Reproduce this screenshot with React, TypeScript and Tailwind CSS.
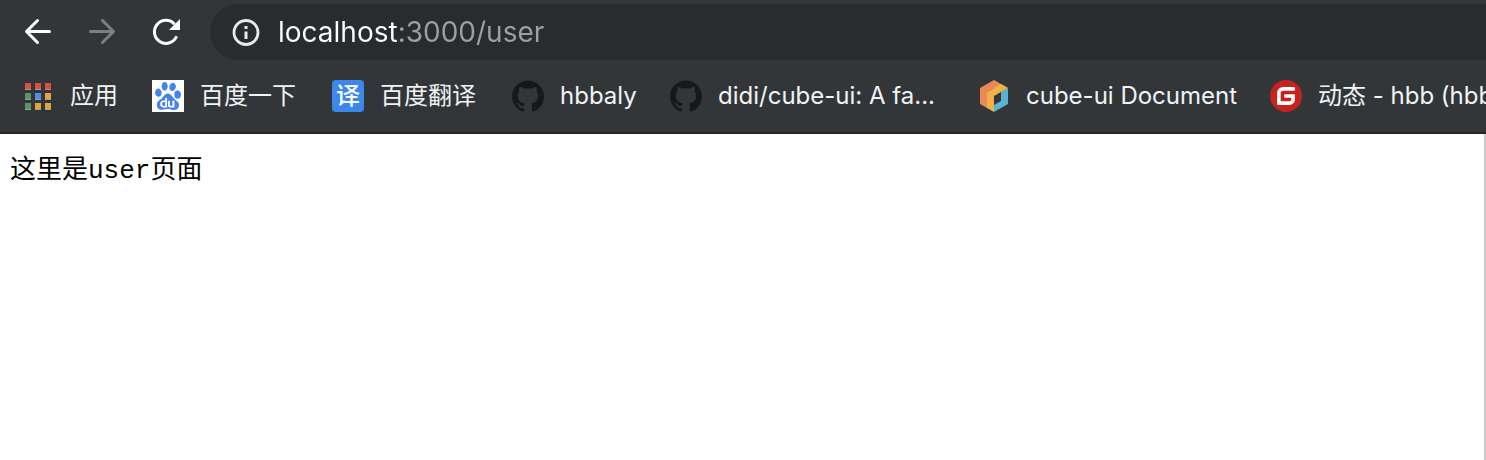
import type { ReactNode } from "react";
import { SiBaidu, SiGitee, SiGithub } from "react-icons/si";

const APP_DOTS = [
  "bg-[#d9503f]", "bg-[#d9503f]", "bg-[#d9503f]",
  "bg-[#559a5c]", "bg-[#4a90e8]", "bg-[#e2a33c]",
  "bg-[#559a5c]", "bg-[#e2a33c]", "bg-[#e2a33c]",
];

function AppsIcon() {
  return (
    <span className="grid grid-cols-3 gap-x-1 gap-y-[3px]">
      {APP_DOTS.map((color, i) => (
        <span key={i} className={`h-[7px] w-1.5 border-b border-[#9a9c9e] ${color}`} />
      ))}
    </span>
  );
}

function CubeIcon() {
  return (
    <svg viewBox="0 0 32 32" className="size-8" aria-hidden="true">
      <path d="M16 0 30 8 23 12 16 8 9 12v16L2 24V8z" fill="#e98a56" />
      <path d="M9 12 23 4l7 4-14 8v16l-7-4z" fill="#efb148" />
      <path d="M30 8v16l-14 8v-8l7-4v-8z" fill="#5ab4cf" />
      <path d="M16 17l7-4v8l-7 4z" fill="#323639" />
    </svg>
  );
}

type Bookmark = { label: string; href: string; width: string; icon: ReactNode };

const BOOKMARKS: Bookmark[] = [
  { label: "应用", href: "#apps", width: "w-[130px]", icon: <AppsIcon /> },
  {
    label: "百度一下",
    href: "#baidu",
    width: "w-[180px]",
    icon: (
      <span className="flex size-8 items-center justify-center bg-white">
        <SiBaidu className="size-7 text-[#4383f0]" />
      </span>
    ),
  },
  {
    label: "百度翻译",
    href: "#fanyi",
    width: "w-[180px]",
    icon: (
      <span className="flex size-8 items-center justify-center rounded bg-[#3c87ec] font-medium text-white" aria-hidden="true">
        译
      </span>
    ),
  },
  { label: "hbbaly", href: "#hbbaly", width: "w-[158px]", icon: <SiGithub className="size-8 text-[#18181a]" /> },
  {
    label: "didi/cube-ui: A fa...",
    href: "#cube-ui",
    width: "w-[308px]",
    icon: <SiGithub className="size-8 text-[#18181a]" />,
  },
  { label: "cube-ui Document", href: "#cube-ui-docs", width: "w-[292px]", icon: <CubeIcon /> },
  {
    label: "动态 - hbb (hbbaly)",
    href: "#gitee",
    width: "w-[308px]",
    icon: (
      <SiGitee className="size-8 bg-[radial-gradient(circle_closest-side,#ffffff_88%,transparent_88%)] text-[#c8221f]" />
    ),
  },
];

function Toolbar() {
  return (
    <div className="flex h-16 items-center pl-[22px]">
      <button type="button" aria-label="Back" className="mr-8 size-8 shrink-0 text-white">
        <svg viewBox="0 0 32 32" fill="none" stroke="currentColor" strokeWidth="3" strokeLinecap="round" strokeLinejoin="round">
          <path d="M27.5 15.5H5M15.5 4.5l-11 11 11 11" />
        </svg>
      </button>
      <button type="button" aria-label="Forward" disabled className="mr-8 size-8 shrink-0 text-[#7d8083]">
        <svg viewBox="0 0 32 32" fill="none" stroke="currentColor" strokeWidth="3" strokeLinecap="round" strokeLinejoin="round">
          <path d="M4.5 15.5H27M16.5 4.5l11 11-11 11" />
        </svg>
      </button>
      <button type="button" aria-label="Reload" className="mr-7 size-8 shrink-0 text-white">
        <svg viewBox="0 0 32 32">
          <path d="M26.6 20.2a11.5 11.5 0 1 1-2-11.9" fill="none" stroke="currentColor" strokeWidth="3" />
          <path d="M30 3v11H19z" fill="currentColor" />
        </svg>
      </button>
      <div className="flex h-14 min-w-0 flex-1 items-center gap-4 rounded-l-full bg-[#282c2f] pl-5">
        <button type="button" aria-label="View site information" className="size-8 shrink-0 text-[#e8eaed]">
          <svg viewBox="0 0 32 32">
            <circle cx="16" cy="16.5" r="12" fill="none" stroke="currentColor" strokeWidth="2.8" />
            <path d="M14.5 15.5h3v7.5h-3zM14.5 10h3v3h-3z" fill="currentColor" />
          </svg>
        </button>
        <input
          type="text"
          aria-label="Address"
          defaultValue="localhost:3000/user"
          className="h-10 min-w-0 flex-1 bg-[linear-gradient(to_right,#ffffff_120px,#9aa0a6_120px)] bg-clip-text text-[28px] leading-10 text-transparent outline-none"
        />
      </div>
    </div>
  );
}

function BookmarksBar() {
  return (
    <nav aria-label="Bookmarks" className="flex h-[68px] overflow-hidden pb-1 pl-[22px] text-2xl">
      {BOOKMARKS.map(({ label, href, width, icon }) => (
        <a key={label} href={href} className={`flex shrink-0 items-center gap-4 whitespace-nowrap text-[#f1f3f4] ${width}`}>
          <span className="flex size-8 shrink-0 items-center justify-center">{icon}</span>
          {label}
        </a>
      ))}
    </nav>
  );
}

export default function App() {
  return (
    <div className="flex min-h-screen flex-col bg-white font-[Inter,'Noto_Sans_CJK_SC',sans-serif]">
      <header className="border-b-2 border-[#242628] bg-[#323639]">
        <Toolbar />
        <BookmarksBar />
      </header>
      <main className="flex-1 border-r-2 border-[#c8c8c8] px-2.5 py-4 font-['Liberation_Mono','Noto_Sans_CJK_SC',monospace] text-[26px] leading-[42px] text-black">
        这里是user页面
      </main>
    </div>
  );
}
